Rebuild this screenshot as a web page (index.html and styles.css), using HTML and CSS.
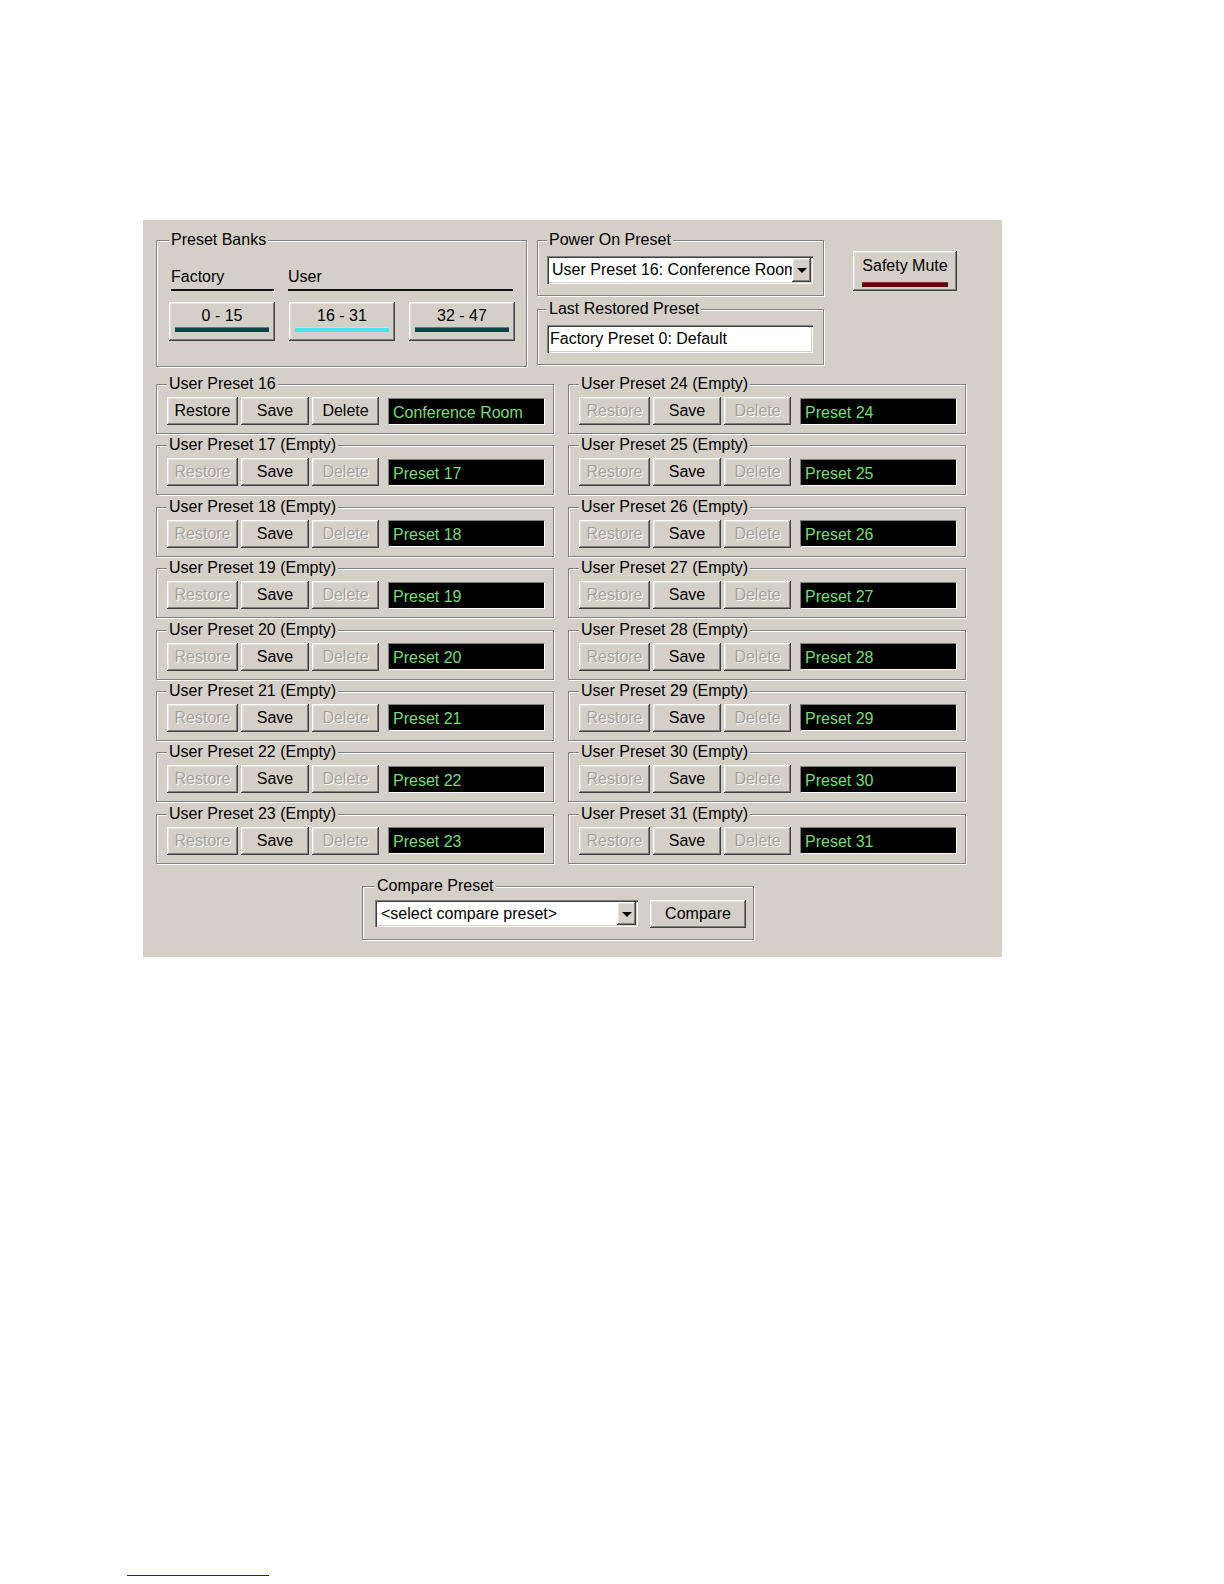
FILE: index.html
```html
<!DOCTYPE html>
<html lang="en">
<head>
    <meta charset="UTF-8">
    <title>Preset Manager</title>
    <link rel="stylesheet" href="styles.css">
</head>
<body>
    <div class="sheet">
        <div class="panel">
            <div class="top">
                <div class="group banks">
                    <div class="group-title">Preset Banks</div>
                    <div class="bank-heads">
                        <div class="bank-head factory">Factory</div>
                        <div class="bank-head user">User</div>
                    </div>
                    <div class="bank-btns">
                        <button class="btn bank-btn">0 - 15<span class="bar"></span></button>
                        <button class="btn bank-btn">16 - 31<span class="bar on"></span></button>
                        <button class="btn bank-btn">32 - 47<span class="bar"></span></button>
                    </div>
                </div>
                <div class="status">
                    <div class="group status-box">
                        <div class="group-title">Power On Preset</div>
                        <div class="combo">
                            <span class="combo-text">User Preset 16: Conference Room</span>
                            <span class="combo-arrow"></span>
                        </div>
                    </div>
                    <div class="group status-box last">
                        <div class="group-title">Last Restored Preset</div>
                        <div class="combo field"><span class="combo-text">Factory Preset 0: Default</span></div>
                    </div>
                </div>
                <button class="btn mute-btn">Safety Mute<span class="bar red"></span></button>
            </div>

            <div class="presets">
                <div class="group preset">
                    <div class="group-title">User Preset 16</div>
                    <div class="preset-row">
                        <button class="btn restore">Restore</button>
                        <button class="btn save">Save</button>
                        <button class="btn delete">Delete</button>
                        <div class="lcd">Conference Room</div>
                    </div>
                </div>
                <div class="group preset">
                    <div class="group-title">User Preset 17 (Empty)</div>
                    <div class="preset-row">
                        <button class="btn restore" disabled>Restore</button>
                        <button class="btn save">Save</button>
                        <button class="btn delete" disabled>Delete</button>
                        <div class="lcd">Preset 17</div>
                    </div>
                </div>
                <div class="group preset">
                    <div class="group-title">User Preset 18 (Empty)</div>
                    <div class="preset-row">
                        <button class="btn restore" disabled>Restore</button>
                        <button class="btn save">Save</button>
                        <button class="btn delete" disabled>Delete</button>
                        <div class="lcd">Preset 18</div>
                    </div>
                </div>
                <div class="group preset">
                    <div class="group-title">User Preset 19 (Empty)</div>
                    <div class="preset-row">
                        <button class="btn restore" disabled>Restore</button>
                        <button class="btn save">Save</button>
                        <button class="btn delete" disabled>Delete</button>
                        <div class="lcd">Preset 19</div>
                    </div>
                </div>
                <div class="group preset">
                    <div class="group-title">User Preset 20 (Empty)</div>
                    <div class="preset-row">
                        <button class="btn restore" disabled>Restore</button>
                        <button class="btn save">Save</button>
                        <button class="btn delete" disabled>Delete</button>
                        <div class="lcd">Preset 20</div>
                    </div>
                </div>
                <div class="group preset">
                    <div class="group-title">User Preset 21 (Empty)</div>
                    <div class="preset-row">
                        <button class="btn restore" disabled>Restore</button>
                        <button class="btn save">Save</button>
                        <button class="btn delete" disabled>Delete</button>
                        <div class="lcd">Preset 21</div>
                    </div>
                </div>
                <div class="group preset">
                    <div class="group-title">User Preset 22 (Empty)</div>
                    <div class="preset-row">
                        <button class="btn restore" disabled>Restore</button>
                        <button class="btn save">Save</button>
                        <button class="btn delete" disabled>Delete</button>
                        <div class="lcd">Preset 22</div>
                    </div>
                </div>
                <div class="group preset">
                    <div class="group-title">User Preset 23 (Empty)</div>
                    <div class="preset-row">
                        <button class="btn restore" disabled>Restore</button>
                        <button class="btn save">Save</button>
                        <button class="btn delete" disabled>Delete</button>
                        <div class="lcd">Preset 23</div>
                    </div>
                </div>

                <div class="group preset">
                    <div class="group-title">User Preset 24 (Empty)</div>
                    <div class="preset-row">
                        <button class="btn restore" disabled>Restore</button>
                        <button class="btn save">Save</button>
                        <button class="btn delete" disabled>Delete</button>
                        <div class="lcd">Preset 24</div>
                    </div>
                </div>
                <div class="group preset">
                    <div class="group-title">User Preset 25 (Empty)</div>
                    <div class="preset-row">
                        <button class="btn restore" disabled>Restore</button>
                        <button class="btn save">Save</button>
                        <button class="btn delete" disabled>Delete</button>
                        <div class="lcd">Preset 25</div>
                    </div>
                </div>
                <div class="group preset">
                    <div class="group-title">User Preset 26 (Empty)</div>
                    <div class="preset-row">
                        <button class="btn restore" disabled>Restore</button>
                        <button class="btn save">Save</button>
                        <button class="btn delete" disabled>Delete</button>
                        <div class="lcd">Preset 26</div>
                    </div>
                </div>
                <div class="group preset">
                    <div class="group-title">User Preset 27 (Empty)</div>
                    <div class="preset-row">
                        <button class="btn restore" disabled>Restore</button>
                        <button class="btn save">Save</button>
                        <button class="btn delete" disabled>Delete</button>
                        <div class="lcd">Preset 27</div>
                    </div>
                </div>
                <div class="group preset">
                    <div class="group-title">User Preset 28 (Empty)</div>
                    <div class="preset-row">
                        <button class="btn restore" disabled>Restore</button>
                        <button class="btn save">Save</button>
                        <button class="btn delete" disabled>Delete</button>
                        <div class="lcd">Preset 28</div>
                    </div>
                </div>
                <div class="group preset">
                    <div class="group-title">User Preset 29 (Empty)</div>
                    <div class="preset-row">
                        <button class="btn restore" disabled>Restore</button>
                        <button class="btn save">Save</button>
                        <button class="btn delete" disabled>Delete</button>
                        <div class="lcd">Preset 29</div>
                    </div>
                </div>
                <div class="group preset">
                    <div class="group-title">User Preset 30 (Empty)</div>
                    <div class="preset-row">
                        <button class="btn restore" disabled>Restore</button>
                        <button class="btn save">Save</button>
                        <button class="btn delete" disabled>Delete</button>
                        <div class="lcd">Preset 30</div>
                    </div>
                </div>
                <div class="group preset">
                    <div class="group-title">User Preset 31 (Empty)</div>
                    <div class="preset-row">
                        <button class="btn restore" disabled>Restore</button>
                        <button class="btn save">Save</button>
                        <button class="btn delete" disabled>Delete</button>
                        <div class="lcd">Preset 31</div>
                    </div>
                </div>
            </div>

            <div class="group compare">
                <div class="group-title">Compare Preset</div>
                <div class="compare-row">
                    <div class="combo compare-combo">
                        <span class="combo-text">&lt;select compare preset&gt;</span>
                        <span class="combo-arrow"></span>
                    </div>
                    <button class="btn compare-btn">Compare</button>
                </div>
            </div>
        </div>
    </div>
    <div class="foot-rule"></div>
</body>
</html>
```

FILE: styles.css
```css
body { margin: 0; background: #fff; color: #000; font-family: "Liberation Sans", Arial, sans-serif; font-size: 16px; }
.sheet { padding: 220px 0 0 143px; }
.panel { width: 859px; height: 737px; box-sizing: border-box; background: #d4d0c8; padding: 20px 36px 0 13px; }

/* etched group box */
.group { border: 1px solid #808080; box-shadow: inset 1px 1px 0 #fff, 1px 1px 0 #fff; box-sizing: border-box; }
.group-title { display: table; margin: -11px 0 0 0; padding: 0 2px; line-height: 20px; background: #d4d0c8; white-space: nowrap; }

/* raised button */
.btn { font: inherit; color: #000; background: #d4d0c8; border: 0; padding: 0; margin: 0; box-sizing: border-box; line-height: 20px; cursor: pointer;
  box-shadow: inset -1px -1px 0 #404040, inset 1px 1px 0 #fff, inset -2px -2px 0 #808080, inset 2px 2px 0 #e4e2dc; }
.btn:disabled { color: #a4a19b; text-shadow: 1px 1px 0 #fff; cursor: default; }

.top { display: flex; align-items: flex-start; }
.banks { width: 371px; padding: 0 9px 25px 12px; }
.bank-heads { display: flex; margin-top: 17px; }
.bank-head { line-height: 20px; padding-bottom: 2px; border-bottom: 2px solid #111; }
.bank-head.factory { width: 103px; margin-left: 2px; }
.bank-head.user { width: 225px; margin-left: 14px; }
.bank-btns { display: flex; gap: 14px; margin-top: 11px; }
.bank-btn { width: 106px; height: 39px; display: flex; flex-direction: column; align-items: center; padding-top: 4px; }
.bar { display: block; width: 94px; height: 4px; margin-top: 1px; background: #0b4444; border-top: 1px solid #3c8c8c; }
.bar.on { background: #48e4e4; border-top-color: #9af4f4; }
.bar.red { width: 86px; margin-top: 6px; background: #5c0a0a; border-top-color: #8a3030; }

.status { width: 287px; margin-left: 10px; }
.status-box { padding: 0 10px 11px 9px; }
.status-box.last { margin-top: 13px; }
.combo { display: flex; height: 28px; margin-top: 6px; background: #fff; box-sizing: border-box; padding: 2px;
  box-shadow: inset 1px 1px 0 #808080, inset 2px 2px 0 #404040, inset -1px -1px 0 #fff, inset -2px -2px 0 #d4d0c8; }
.combo-text { flex: 1; overflow: hidden; white-space: nowrap; line-height: 24px; padding-left: 3px; }
.combo.field .combo-text { padding-left: 1px; }
.combo-arrow { width: 19px; flex: none; background: #d4d0c8; display: flex; align-items: center; justify-content: center;
  box-shadow: inset -1px -1px 0 #404040, inset 1px 1px 0 #fff, inset -2px -2px 0 #808080, inset 2px 2px 0 #e4e2dc; }
.combo-arrow::after { content: ""; border-left: 5px solid transparent; border-right: 5px solid transparent; border-top: 5px solid #000; margin-top: 1px; }

.mute-btn { width: 104px; height: 40px; margin: 11px 0 0 29px; display: flex; flex-direction: column; align-items: center; padding-top: 5px; }

.presets { display: grid; grid-template-columns: 398px 398px; grid-template-rows: repeat(8, 50px); grid-auto-flow: column; column-gap: 14px; row-gap: 11.4px; margin-top: 17px; }
.preset { padding: 0 8px 8px 10px; }
.preset-row { display: flex; align-items: center; margin-top: 3px; }
.preset-row .btn { height: 28px; margin-right: 3px; }
.preset-row .restore { width: 71px; }
.preset-row .save { width: 68px; }
.preset-row .delete { width: 67px; margin-right: 9px; }
.lcd { width: 157px; height: 27px; box-sizing: border-box; background: #000; color: #74dc74; padding: 2px 0 0 4px; line-height: 23px; white-space: nowrap; overflow: hidden;
  border: 1px solid; border-color: #808080 #fff #fff #808080; }

.compare { width: 392px; margin: 22px 0 0 206px; padding: 0 7px 11px 12px; }
.compare-row { display: flex; align-items: center; margin-top: 4px; }
.compare-combo { width: 263px; height: 27px; margin-top: 0; }
.compare-combo .combo-text { line-height: 23px; padding-left: 4px; }
.compare-btn { width: 96px; height: 28px; margin-left: 12px; }

.foot-rule { width: 142px; margin: 618px 0 0 127px; border-top: 1px solid #1a1a8c; }
```
